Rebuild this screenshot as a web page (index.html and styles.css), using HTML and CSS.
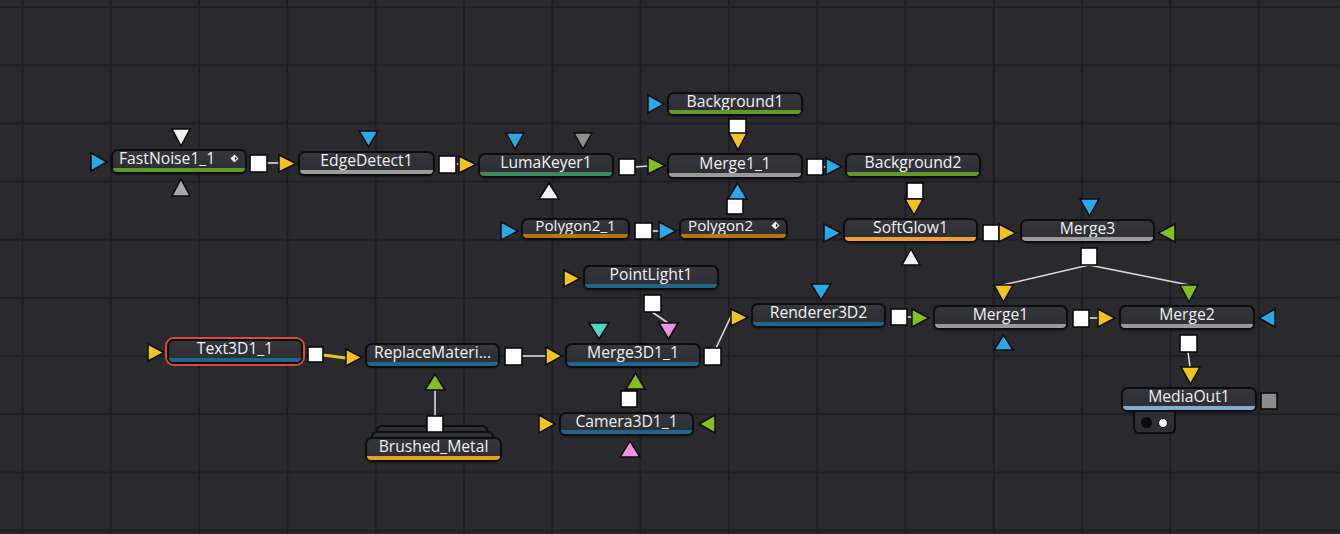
FILE: index.html
```html
<!DOCTYPE html>
<html>
<head>
<meta charset="utf-8">
<link rel="stylesheet" href="styles.css">
</head>
<body>
<div class="canvas">
  <div class="node n-fastnoise icon-node"><div class="label">FastNoise1_1<svg class="ico" viewBox="0 0 10 10"><polygon points="5,0.5 9.5,5 5,9.5 0.5,5" fill="#eee"/><polygon points="5.5,2.8 7.7,5 5.5,7.2" fill="#2e2f35"/></svg></div><div class="bar green"></div></div>
  <div class="node n-edge"><div class="label">EdgeDetect1</div><div class="bar gray"></div></div>
  <div class="node n-luma"><div class="label">LumaKeyer1</div><div class="bar teal"></div></div>
  <div class="node n-bg1"><div class="label">Background1</div><div class="bar green"></div></div>
  <div class="node n-merge11"><div class="label">Merge1_1</div><div class="bar gray"></div></div>
  <div class="node n-bg2"><div class="label">Background2</div><div class="bar green"></div></div>
  <div class="node small n-poly21"><div class="label">Polygon2_1</div><div class="bar brown"></div></div>
  <div class="node small icon-node n-poly2"><div class="label">Polygon2<svg class="ico" viewBox="0 0 10 10"><polygon points="5,0.5 9.5,5 5,9.5 0.5,5" fill="#eee"/><polygon points="5.5,2.8 7.7,5 5.5,7.2" fill="#2e2f35"/></svg></div><div class="bar brown"></div></div>
  <div class="node n-softglow"><div class="label">SoftGlow1</div><div class="bar orange"></div></div>
  <div class="node n-merge3"><div class="label">Merge3</div><div class="bar gray"></div></div>
  <div class="node n-pointlight"><div class="label">PointLight1</div><div class="bar dblue"></div></div>
  <div class="node n-renderer"><div class="label">Renderer3D2</div><div class="bar dblue"></div></div>
  <div class="node n-merge1"><div class="label">Merge1</div><div class="bar gray"></div></div>
  <div class="node n-merge2"><div class="label">Merge2</div><div class="bar gray"></div></div>
  <div class="node selected n-text3d"><div class="label">Text3D1_1</div><div class="bar dblue"></div></div>
  <div class="node n-replace"><div class="label">ReplaceMateri...</div><div class="bar dblue"></div></div>
  <div class="node n-merge3d"><div class="label">Merge3D1_1</div><div class="bar dblue"></div></div>
  <div class="stack n-brushed">
    <div class="stack-back back2"></div>
    <div class="stack-back back1"></div>
    <div class="node inner"><div class="label">Brushed_Metal</div><div class="bar amber"></div></div>
  </div>
  <div class="node n-camera"><div class="label">Camera3D1_1</div><div class="bar dblue"></div></div>
  <div class="node n-mediaout"><div class="label">MediaOut1</div><div class="bar lblue"></div>
    <div class="tab"><span class="dot black"></span><span class="dot white"></span></div>
  </div>

  <svg class="wires" width="1340" height="534" viewBox="0 0 1340 534">
    <g class="lines">
      <line x1="267" y1="163" x2="279" y2="163"/>
      <line x1="456" y1="164" x2="459" y2="164"/>
      <line x1="635" y1="167" x2="648" y2="166"/>
      <line x1="823" y1="167" x2="826" y2="167"/>
      <line x1="652" y1="231" x2="659" y2="231"/>
      <line x1="1089" y1="265" x2="1003" y2="285"/>
      <line x1="1089" y1="265" x2="1189" y2="285"/>
      <line x1="1089" y1="318" x2="1098" y2="318"/>
      <line x1="1188" y1="352" x2="1190" y2="367"/>
      <line x1="522" y1="356" x2="546" y2="356"/>
      <line x1="652" y1="312" x2="668" y2="323"/>
      <line x1="716" y1="348" x2="733" y2="312"/>
      <line x1="435" y1="416" x2="435" y2="390"/>
      <line x1="907" y1="317" x2="912" y2="317"/>
      <line class="yline" x1="323" y1="355" x2="346" y2="358"/>
    </g>
    <g class="sq">
      <rect x="250" y="155" width="17" height="17"/>
      <rect x="439" y="156" width="17" height="17"/>
      <rect x="619" y="159" width="16" height="16"/>
      <rect x="807" y="159" width="16" height="16"/>
      <rect x="729" y="119" width="17" height="16"/>
      <rect x="907" y="183" width="16" height="16"/>
      <rect x="635" y="223" width="17" height="16"/>
      <rect x="727" y="198" width="16" height="16"/>
      <rect x="983" y="225" width="16" height="16"/>
      <rect x="1081" y="248" width="16" height="17"/>
      <rect x="891" y="309" width="16" height="16"/>
      <rect x="1073" y="310" width="16" height="17"/>
      <rect x="1180" y="335" width="17" height="17"/>
      <rect x="308" y="347" width="15" height="15"/>
      <rect x="505" y="348" width="17" height="17"/>
      <rect x="427" y="416" width="16" height="16"/>
      <rect x="644" y="295" width="17" height="17"/>
      <rect x="704" y="348" width="17" height="17"/>
      <rect x="621" y="391" width="16" height="16"/>
      <rect class="graysq" x="1261" y="393" width="16" height="16"/>
    </g>
    <g class="tri">
      <polygon class="blue" points="91,153 107,162 91,171"/>
      <polygon class="yellow" points="279,155 296,163.5 279,172"/>
      <polygon class="yellow" points="459,156 476,164.5 459,173"/>
      <polygon class="green" points="648,157 665,165.5 648,174"/>
      <polygon class="blue" points="648,95 664,104 648,113"/>
      <polygon class="blue" points="826,158 842,166.5 826,175"/>
      <polygon class="blue" points="501,222 518,231 501,240"/>
      <polygon class="blue" points="659,222 676,231 659,240"/>
      <polygon class="blue" points="824,224 841,233 824,242"/>
      <polygon class="yellow" points="999,224 1016,233 999,242"/>
      <polygon class="yellow" points="564,270 580,278.5 564,287"/>
      <polygon class="yellow" points="731,309 748,317.5 731,326"/>
      <polygon class="green" points="912,309 929,318 912,327"/>
      <polygon class="yellow" points="1098,309 1115,318 1098,327"/>
      <polygon class="yellow" points="148,344 164,352.5 148,361"/>
      <polygon class="yellow" points="346,349 362,357.5 346,366"/>
      <polygon class="yellow" points="546,347 562,356 546,365"/>
      <polygon class="yellow" points="539,415 555,424 539,433"/>

      <polygon class="green" points="1175,224 1158,233 1175,242"/>
      <polygon class="blue" points="1275,309 1259,318 1275,327"/>
      <polygon class="green" points="715,415 699,424 715,433"/>

      <polygon class="white" points="172,129 190,129 181,146"/>
      <polygon class="blue" points="359,131 378,131 368.5,147"/>
      <polygon class="blue" points="506,133 524,133 515,149"/>
      <polygon class="gray" points="574,133 592,133 583,149"/>
      <polygon class="yellow" points="729,133 747,133 738,150"/>
      <polygon class="yellow" points="905,199 923,199 914,215"/>
      <polygon class="blue" points="1080,199 1099,199 1089.5,216"/>
      <polygon class="yellow" points="994,285 1013,285 1003.5,302"/>
      <polygon class="green" points="1180,285 1198,285 1189,302"/>
      <polygon class="blue" points="811,284 831,284 821,300"/>
      <polygon class="teal" points="589,323 609,323 599,339"/>
      <polygon class="pink" points="659,323 678,323 668.5,339"/>
      <polygon class="yellow" points="1181,367 1200,367 1190.5,384"/>

      <polygon class="lgray" points="172,196 190,196 181,179"/>
      <polygon class="white" points="539,199 559,199 549,183"/>
      <polygon class="blue" points="728,199 747,199 737.5,183"/>
      <polygon class="white" points="902,265 920,265 911,249"/>
      <polygon class="blue" points="994,350 1013,350 1003.5,335"/>
      <polygon class="green" points="425,390 445,390 435,374"/>
      <polygon class="green" points="626,389 645,389 635.5,373"/>
      <polygon class="pink" points="620,457 640,457 630,441"/>
    </g>
  </svg>
</div>
</body>
</html>
```
FILE: styles.css
```css
html, body {
  margin: 0;
  padding: 0;
  background: #29292e;
}

.canvas {
  position: relative;
  width: 1340px;
  height: 534px;
  overflow: hidden;
  background-color: #29292e;
  background-image:
    linear-gradient(to right, #1f1f23 1.5px, transparent 1.5px),
    linear-gradient(to bottom, #1f1f23 1.5px, transparent 1.5px);
  background-size: 88.3px 58.2px;
  background-position: 21.5px 6px;
  font-family: "Open Sans", "Noto Sans", sans-serif;
}

.node {
  position: absolute;
  box-sizing: border-box;
  width: 136px;
  height: 25px;
  border: 2px solid #0d0d0f;
  border-radius: 7px;
  background: linear-gradient(#35363c, #2c2d32);
  display: flex;
  flex-direction: column;
  box-shadow: 0 1px 2px rgba(0, 0, 0, 0.35);
}

.label {
  flex: 1;
  min-height: 0;
  display: flex;
  align-items: center;
  justify-content: center;
  color: #f0f0f0;
  font-size: 15.7px;
  line-height: 14px;
  white-space: nowrap;
  padding-bottom: 3px;
}

.icon-node .label {
  justify-content: space-between;
  padding-left: 6px;
  padding-right: 6px;
}

.ico {
  width: 9px;
  height: 9px;
}

.bar {
  flex: none;
  height: 4px;
  border-radius: 0 0 5px 5px;
}

.green { background: #5f9a27; }
.gray { background: #9a9a9a; }
.teal { background: #3e8a60; }
.brown { background: #b57810; }
.orange { background: #f0a030; }
.dblue { background: #1f6689; }
.amber { background: #e3a21c; }
.lblue { background: #82abd6; }

.node.small {
  width: 109px;
  height: 22px;
}

.node.small .label {
  font-size: 15.2px;
  line-height: 14px;
  padding-bottom: 4px;
}

.node.small.icon-node .label {
  padding-left: 7px;
}

.node.selected {
  box-shadow: 0 0 0 2px #e0473a;
}

/* stacked node (Brushed_Metal) */
.stack {
  position: absolute;
  width: 137px;
  height: 25px;
}

.stack .node.inner {
  left: 0;
  top: 0;
  width: 137px;
}

.stack-back {
  position: absolute;
  box-sizing: border-box;
  height: 14px;
  border: 2px solid #0d0d0f;
  border-radius: 6px;
  background: #2f3035;
}

.back2 {
  left: 11px;
  right: 14px;
  top: -12px;
}

.back1 {
  left: 6px;
  right: 8px;
  top: -6px;
}

/* MediaOut tab */
.tab {
  position: absolute;
  left: 10px;
  top: 23px;
  width: 43px;
  height: 22px;
  box-sizing: border-box;
  border: 2px solid #0d0d0f;
  border-top: none;
  border-radius: 0 0 6px 6px;
  background: #2e2f34;
  display: flex;
  align-items: center;
  justify-content: center;
  gap: 6px;
  padding-top: 1px;
}

.dot {
  border-radius: 50%;
  box-sizing: border-box;
}

.dot.black {
  width: 11px;
  height: 11px;
  background: #0a0a0a;
}

.dot.white {
  width: 10px;
  height: 10px;
  background: #f5f5f5;
  border: 1.5px solid #0a0a0a;
}

/* node positions on the canvas */
.n-fastnoise { left: 111px; top: 149px; }
.n-edge { left: 298px; top: 151px; width: 137px; }
.n-luma { left: 478px; top: 153px; }
.n-bg1 { left: 667px; top: 92px; height: 24px; }
.n-merge11 { left: 667px; top: 153px; height: 26px; }
.n-bg2 { left: 845px; top: 153px; }
.n-poly21 { left: 521px; top: 218px; }
.n-poly2 { left: 679px; top: 218px; }
.n-softglow { left: 843px; top: 218px; width: 135px; }
.n-merge3 { left: 1020px; top: 219px; width: 135px; height: 24px; }
.n-pointlight { left: 583px; top: 265px; }
.n-renderer { left: 751px; top: 303px; width: 135px; }
.n-merge1 { left: 933px; top: 305px; width: 135px; }
.n-merge2 { left: 1119px; top: 305px; }
.n-text3d { left: 167px; top: 339px; }
.n-replace { left: 365px; top: 343px; width: 135px; }
.n-merge3d { left: 565px; top: 343px; }
.n-brushed { left: 365px; top: 437px; }
.n-camera { left: 559px; top: 412px; width: 135px; height: 24px; }
.n-mediaout { left: 1121px; top: 387px; }

/* connectors */
.wires {
  position: absolute;
  left: 0;
  top: 0;
  pointer-events: none;
}

.lines line {
  stroke: #dcdcdc;
  stroke-width: 1.6;
}

.lines .yline {
  stroke: #e8c21c;
  stroke-width: 3;
}

.sq rect {
  fill: #ffffff;
  stroke: #0b0b0b;
  stroke-width: 1.6;
}

.sq .graysq {
  fill: #8c8c8c;
}

.tri polygon {
  stroke: #0b0b0b;
  stroke-width: 1.5;
  stroke-linejoin: miter;
}

.tri .blue { fill: #27abe8; }
.tri .yellow { fill: #f2c318; }
.tri .green { fill: #84c01b; }
.tri .white { fill: #f2f2f2; }
.tri .gray { fill: #8e8e8e; }
.tri .lgray { fill: #a8a8a8; }
.tri .teal { fill: #4fd8c0; }
.tri .pink { fill: #f290e2; }
```
